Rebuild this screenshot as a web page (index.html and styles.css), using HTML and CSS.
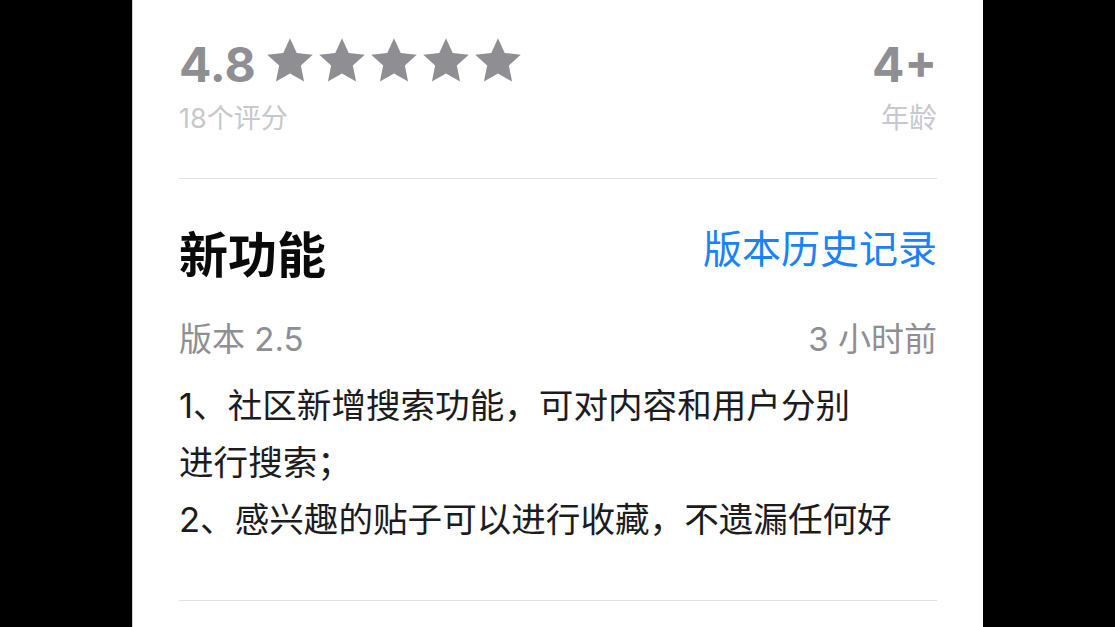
FILE: index.html
```html
<!DOCTYPE html>
<html lang="zh-CN">
<head>
    <meta charset="UTF-8">
    <meta name="viewport" content="width=device-width, initial-scale=1.0">
    <title>新功能</title>
    <link rel="stylesheet" href="styles.css">
</head>
<body>

    <div class="screen">
        <div class="rating-row">
            <div class="rating-col">
                <div class="score-line">
                    <span class="score">4.8</span>
                    <div class="stars">
                        <svg class="star" viewBox="0 0 24 24"><polygon points="12,1.5 15.1,8.3 22.5,9.1 17,14.1 18.5,21.5 12,17.8 5.5,21.5 7,14.1 1.5,9.1 8.9,8.3"/></svg>
                        <svg class="star" viewBox="0 0 24 24"><polygon points="12,1.5 15.1,8.3 22.5,9.1 17,14.1 18.5,21.5 12,17.8 5.5,21.5 7,14.1 1.5,9.1 8.9,8.3"/></svg>
                        <svg class="star" viewBox="0 0 24 24"><polygon points="12,1.5 15.1,8.3 22.5,9.1 17,14.1 18.5,21.5 12,17.8 5.5,21.5 7,14.1 1.5,9.1 8.9,8.3"/></svg>
                        <svg class="star" viewBox="0 0 24 24"><polygon points="12,1.5 15.1,8.3 22.5,9.1 17,14.1 18.5,21.5 12,17.8 5.5,21.5 7,14.1 1.5,9.1 8.9,8.3"/></svg>
                        <svg class="star" viewBox="0 0 24 24"><polygon points="12,1.5 15.1,8.3 22.5,9.1 17,14.1 18.5,21.5 12,17.8 5.5,21.5 7,14.1 1.5,9.1 8.9,8.3"/></svg>
                    </div>
                </div>
                <div class="label">18个评分</div>
            </div>
            <div class="rating-col age">
                <div class="score">4+</div>
                <div class="label label-age">年龄</div>
            </div>
        </div>

        <div class="section">
            <div class="section-head">
                <h2>新功能</h2>
                <a class="history" href="#">版本历史记录</a>
            </div>
            <div class="meta">
                <span>版本 2.5</span>
                <span>3 小时前</span>
            </div>
            <p class="notes">
                1、社区新增搜索功能，可对内容和用户分别<br>
                进行搜索；<br>
                2、感兴趣的贴子可以进行收藏，不遗漏任何好
            </p>
        </div>
    </div>

</body>
</html>
```

FILE: styles.css
```css
body {
    margin: 0;
    background: #000;
    font-family: Inter, "Noto Sans CJK SC", sans-serif;
}
.screen {
    width: 851px;
    height: 627px;
    margin: 0 auto;
    padding: 0 46px;
    box-sizing: border-box;
    background: #fff;
    border-left: 1px solid #d4d4d4;
    overflow: hidden;
}
.rating-row {
    display: flex;
    justify-content: space-between;
    padding-top: 41px;
    padding-bottom: 46px;
    border-bottom: 1px solid #e2e2e4;
}
.rating-col {
    display: flex;
    flex-direction: column;
}
.rating-col.age {
    align-items: flex-end;
}
.score-line {
    display: flex;
    align-items: flex-start;
    gap: 8px;
}
.score {
    font-size: 48px;
    line-height: 48px;
    font-weight: 700;
    color: #8e8e93;
}
.stars {
    display: flex;
    margin-top: -6px;
}
.star {
    width: 52px;
    height: 52px;
    fill: #8e8e93;
}
.label {
    margin-top: 16px;
    font-size: 27px;
    line-height: 27px;
    color: #c7c7cc;
}
.label-age {
    font-size: 28px;
    line-height: 28px;
    margin-top: 15px;
}
.section {
    padding-top: 48px;
    padding-bottom: 52px;
    border-bottom: 1px solid #e2e2e4;
}
.section-head {
    display: flex;
    justify-content: space-between;
    align-items: flex-start;
}
h2 {
    margin: 4px 0 0;
    font-size: 49px;
    line-height: 49px;
    font-weight: 700;
    color: #0a0a0a;
}
.history {
    margin-top: 2px;
    font-size: 39px;
    line-height: 40px;
    color: #1a82f6;
    text-decoration: none;
}
.meta {
    display: flex;
    justify-content: space-between;
    margin-top: 43px;
    font-size: 33px;
    line-height: 33px;
    color: #8e8e93;
}
.notes {
    margin: 21px 0 0;
    font-size: 34.6px;
    line-height: 57px;
    color: #1c1c1e;
}
```
